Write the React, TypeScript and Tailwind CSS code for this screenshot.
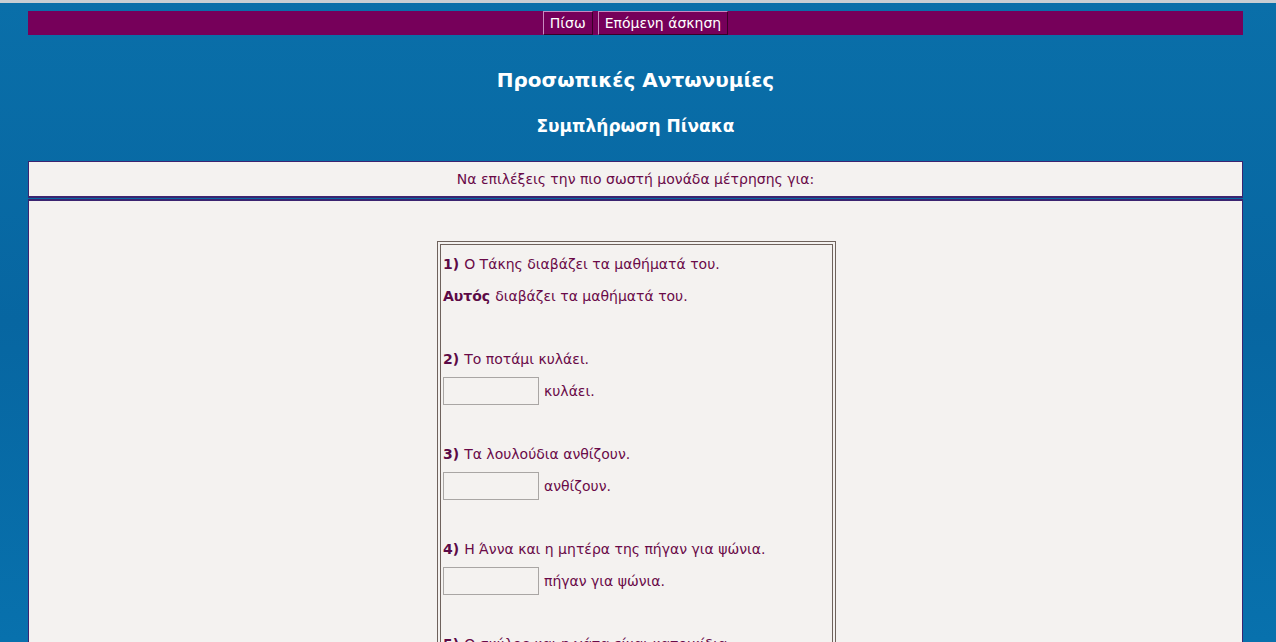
import React from 'react';

const items = [
  { n: '1)', q: 'Ο Τάκης διαβάζει τα μαθήματά του.', answer: 'Αυτός', rest: 'διαβάζει τα μαθήματά του.' },
  { n: '2)', q: 'Το ποτάμι κυλάει.', rest: 'κυλάει.' },
  { n: '3)', q: 'Τα λουλούδια ανθίζουν.', rest: 'ανθίζουν.' },
  { n: '4)', q: 'Η Άννα και η μητέρα της πήγαν για ψώνια.', rest: 'πήγαν για ψώνια.' },
  { n: '5)', q: 'Ο σκύλος και η γάτα είναι κατοικίδια.', rest: 'είναι κατοικίδια.' },
];

const NavButton = ({ label }: { label: string }) => (
  <button className="h-[24px] px-[6px] bg-[#76005a] text-white text-[14px] leading-none border border-t-[#c98ac0] border-l-[#c98ac0] border-b-[#3a0028] border-r-[#3a0028]">
    {label}
  </button>
);

export default function App() {
  return (
    <div
      className="h-[642px] overflow-hidden bg-gradient-to-b from-[#0a6fa9] via-[#0766a1] to-[#0871ad] text-[14px]"
      style={{ fontFamily: '"DejaVu Sans", "Liberation Sans", sans-serif' }}
    >
      <div className="h-[3px] bg-[#c9ced3]" />
      <div className="px-[28px] pr-[33px]">
        {/* top nav */}
        <div className="mt-[8px] h-[24px] bg-[#76005a] flex justify-center gap-[5px]">
          <NavButton label="Πίσω" />
          <NavButton label="Επόμενη άσκηση" />
        </div>

        {/* headings */}
        <h1 className="mt-[32px] text-center text-white font-bold text-[20px] leading-[26px]">
          Προσωπικές Αντωνυμίες
        </h1>
        <h2 className="mt-[22px] text-center text-white font-bold text-[17px] leading-[22px]">
          Συμπλήρωση Πίνακα
        </h2>

        {/* instruction */}
        <div className="mt-[24px] h-[37px] bg-[#f4f2f0] border border-[#3b2470] border-b-2 flex items-center justify-center text-[#6a0a48]">
          Να επιλέξεις την πιο σωστή μονάδα μέτρησης για:
        </div>

        {/* exercise */}
        <div className="mt-[1px] bg-[#f4f2f0] border border-[#3b2470] border-t-2 pt-[40px] h-[460px]">
          <div className="w-[399px] ml-[408px] border border-[#6e625c] p-[2px]">
            <div className="border border-[#6e625c] px-[2px] pt-[4px] pb-[20px] text-[#6a0a48]">
              {items.map((it, i) => (
                <div key={i} className={i === 0 ? '' : 'mt-[31px]'}>
                  <div className="h-[30px] flex items-center whitespace-nowrap">
                    <span className="font-bold text-[#5c0a46] mr-[5px]">{it.n}</span>
                    {it.q}
                  </div>
                  <div className="h-[34px] flex items-center whitespace-nowrap">
                    {it.answer ? (
                      <>
                        <span className="font-bold text-[#5c0a46] mr-[5px]">{it.answer}</span>
                        {it.rest}
                      </>
                    ) : (
                      <>
                        <input
                          type="text"
                          className="w-[96px] h-[28px] bg-[#f4f2f0] border border-[#a9a6a4] mr-[5px] outline-none"
                        />
                        {it.rest}
                      </>
                    )}
                  </div>
                </div>
              ))}
            </div>
          </div>
        </div>
      </div>
    </div>
  );
}
